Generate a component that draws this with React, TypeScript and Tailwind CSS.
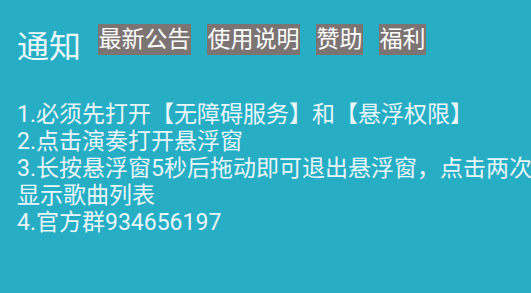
import React from "react";

const tabs = ["最新公告", "使用说明", "赞助", "福利"];

const lines = [
  "1.必须先打开【无障碍服务】和【悬浮权限】",
  "2.点击演奏打开悬浮窗",
  "3.长按悬浮窗5秒后拖动即可退出悬浮窗，点击两次",
  "显示歌曲列表",
  "4.官方群934656197",
];

export default function App() {
  return (
    <div
      className="h-[293px] w-full overflow-hidden bg-[#27adc4] pl-[17px]"
      style={{ fontFamily: 'Roboto, "Noto Sans CJK SC", sans-serif' }}
    >
      {/* header */}
      <div className="flex items-start pt-[24px]">
        <h1 className="mt-[7px] text-[32px] leading-[32px] font-normal text-[#e8f8fa]">
          通知
        </h1>
        <div className="ml-[17px] flex gap-[16px]">
          {tabs.map((t) => (
            <span
              key={t}
              className="bg-[#7c7473] px-[0.5px] text-[23px] leading-[31px] text-white"
            >
              {t}
            </span>
          ))}
        </div>
      </div>

      {/* notice body */}
      <div className="mt-[38px] text-[23px] leading-[27px] text-[#e6f7fa]">
        {lines.map((l) => (
          <p key={l} className="whitespace-nowrap">
            {l}
          </p>
        ))}
      </div>
    </div>
  );
}
